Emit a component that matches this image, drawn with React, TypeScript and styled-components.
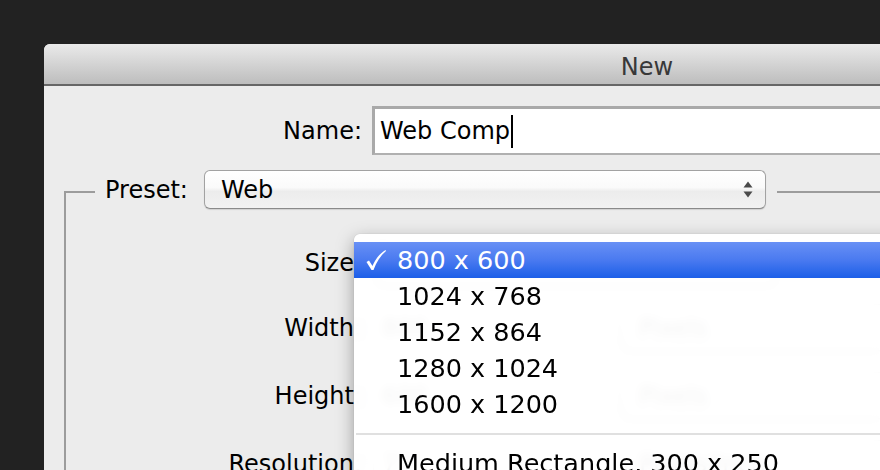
import React from "react";
import styled, { createGlobalStyle } from "styled-components";

const Global = createGlobalStyle`
  html, body { margin: 0; padding: 0; background: #222222; overflow: hidden; }
  body { width: 880px; height: 470px; font-family: "DejaVu Sans", "Liberation Sans", sans-serif; }
`;

const Screen = styled.div`
  width: 880px;
  height: 470px;
  overflow: hidden;
  padding: 44px 0 0 44px;
  box-sizing: border-box;
`;

const Window = styled.div`
  width: 1206px;
  height: 600px;
  background: #ececec;
  border-radius: 6px 6px 0 0;
  overflow: hidden;
`;

const TitleBar = styled.div`
  height: 42px;
  background: linear-gradient(#eaeaea, #bdbdbd);
  border-bottom: 2px solid #666666;
  display: flex;
  align-items: center;
  justify-content: center;
  font-size: 24px;
  color: #383838;
  padding-top: 6px;
  box-sizing: border-box;
`;

const Content = styled.div`
  position: relative;
  padding: 20px 0 0 20px;
  display: flex;
  flex-direction: column;
`;

const Row = styled.div<{ $top?: number }>`
  display: flex;
  align-items: center;
  gap: 10px;
  margin-top: ${(p) => p.$top ?? 0}px;
`;

const Label = styled.div<{ $w?: number }>`
  width: ${(p) => p.$w ?? 296}px;
  text-align: right;
  font-size: 24px;
  color: #000;
  white-space: nowrap;
`;

const NameField = styled.div`
  flex: 1;
  height: 49px;
  box-sizing: border-box;
  background: #fff;
  border-top: 3px solid #a9a9a9;
  border-left: 3px solid #a9a9a9;
  border-bottom: 2px solid #b0b0b0;
  display: flex;
  align-items: center;
  padding-left: 5px;
  font-size: 24px;
  color: #000;
`;

const Caret = styled.span`
  display: inline-block;
  width: 2px;
  height: 33px;
  background: #000;
  margin-left: 1px;
`;

const Group = styled.div`
  display: flex;
  flex-direction: column;
  margin-top: 15px;
`;

const GroupHeader = styled.div`
  display: flex;
  align-items: flex-start;
`;

const CornerLine = styled.div`
  width: 31px;
  height: 18px;
  margin-top: 21px;
  border-top: 2px solid #9c9c9c;
  border-left: 2px solid #9c9c9c;
  box-sizing: border-box;
`;

const HeaderLabel = styled.div`
  font-size: 24px;
  color: #000;
  margin-left: 10px;
  height: 39px;
  display: flex;
  align-items: center;
`;

const Popup = styled.div<{ $w: number }>`
  width: ${(p) => p.$w}px;
  height: 39px;
  box-sizing: border-box;
  margin-left: 16px;
  border: 1px solid #a2a2a2;
  border-bottom-color: #8a8a8a;
  border-radius: 6px;
  background: linear-gradient(#ffffff 0%, #fafafa 45%, #ececec 55%, #f2f2f2 100%);
  box-shadow: 0 1px 1px rgba(0, 0, 0, 0.12);
  display: flex;
  align-items: center;
  justify-content: space-between;
  padding: 0 12px 0 16px;
  font-size: 24px;
  color: #000;
`;

const RightLine = styled.div`
  flex: 1;
  height: 2px;
  background: #9c9c9c;
  margin: 21px 0 0 11px;
`;

const GroupBody = styled.div`
  border-left: 2px solid #9c9c9c;
  padding: 30px 0 40px 0;
  display: flex;
  flex-direction: column;
`;

const BodyRow = styled.div<{ $top?: number }>`
  display: flex;
  align-items: center;
  margin-top: ${(p) => p.$top ?? 0}px;
`;

const BodyLabel = styled.div`
  width: 296px;
  text-align: right;
  font-size: 24px;
  color: #000;
  white-space: nowrap;
`;

const Field = styled.div`
  width: 235px;
  height: 47px;
  margin-left: 11px;
  box-sizing: border-box;
  background: #fff;
  border: 1px solid #a0a0a0;
  font-size: 24px;
  display: flex;
  align-items: center;
  padding-left: 8px;
`;

const SmallPopup = styled.div<{ $w: number }>`
  width: ${(p) => p.$w}px;
  height: 47px;
  margin-left: 14px;
  box-sizing: border-box;
  border: 1px solid #a0a0a0;
  border-radius: 6px;
  background: linear-gradient(#ffffff, #ececec);
  font-size: 24px;
  display: flex;
  align-items: center;
  padding-left: 16px;
`;

const Menu = styled.div`
  position: absolute;
  left: 310px;
  top: 148px;
  width: 700px;
  height: 400px;
  padding-top: 8px;
  box-sizing: border-box;
  background: rgba(255, 255, 255, 0.96);
  backdrop-filter: blur(4px);
  border-radius: 6px;
  box-shadow: 0 6px 18px rgba(0, 0, 0, 0.35), 0 0 1px rgba(0, 0, 0, 0.3);
  font-size: 25.5px;
  color: #000;
`;

const MenuItem = styled.div<{ $active?: boolean }>`
  height: 36px;
  display: flex;
  align-items: center;
  padding-left: 43px;
  position: relative;
  white-space: nowrap;
  color: ${(p) => (p.$active ? "#fff" : "#000")};
  background: ${(p) =>
    p.$active ? "linear-gradient(#6890f5, #4a7af0 50%, #1c5fe8)" : "transparent"};
`;

const CheckIcon = styled.svg`
  position: absolute;
  left: 11px;
  top: 7px;
`;

const Separator = styled.div`
  height: 2px;
  background: #e0e0e0;
  margin: 11px 0 10px 2px;
`;

const Arrows = () => (
  <svg width="10" height="17" viewBox="0 0 10 17">
    <path d="M5 0.5 L9.5 6.5 L0.5 6.5 Z" fill="#4a4a4a" />
    <path d="M0.5 10.5 L9.5 10.5 L5 16.5 Z" fill="#4a4a4a" />
  </svg>
);

const Check = () => (
  <CheckIcon width="22" height="22" viewBox="0 0 22 22">
    <path
      d="M1.5 13 L4 11.5 L7.5 17 C10 11 14.5 4.5 20.5 1 L21 2 C15.5 6.5 11.5 13 8.5 21 L6.5 21 Z"
      fill="#ffffff"
    />
  </CheckIcon>
);

const sizes = ["800 x 600", "1024 x 768", "1152 x 864", "1280 x 1024", "1600 x 1200"];

export default function App() {
  return (
    <>
      <Global />
      <Screen>
        <Window>
          <TitleBar>New</TitleBar>
          <Content>
            <Row>
              <Label $w={298}>Name:</Label>
              <NameField>
                Web Comp
                <Caret />
              </NameField>
            </Row>
            <Group>
              <GroupHeader>
                <CornerLine />
                <HeaderLabel>Preset:</HeaderLabel>
                <Popup $w={562}>
                  <span>Web</span>
                  <Arrows />
                </Popup>
                <RightLine />
              </GroupHeader>
              <GroupBody>
                <BodyRow>
                  <BodyLabel>Size:</BodyLabel>
                  <SmallPopup $w={400}>800 x 600</SmallPopup>
                </BodyRow>
                <BodyRow $top={18}>
                  <BodyLabel>Width:</BodyLabel>
                  <Field>800</Field>
                  <SmallPopup $w={300}>Pixels</SmallPopup>
                </BodyRow>
                <BodyRow $top={21}>
                  <BodyLabel>Height:</BodyLabel>
                  <Field>600</Field>
                  <SmallPopup $w={300}>Pixels</SmallPopup>
                </BodyRow>
                <BodyRow $top={21}>
                  <BodyLabel>Resolution:</BodyLabel>
                  <Field>72</Field>
                  <SmallPopup $w={300}>Pixels/Inch</SmallPopup>
                </BodyRow>
              </GroupBody>
            </Group>
            <Menu>
              {sizes.map((s, i) => (
                <MenuItem key={s} $active={i === 0}>
                  {i === 0 && <Check />}
                  {s}
                </MenuItem>
              ))}
              <Separator />
              <MenuItem>Medium Rectangle, 300 x 250</MenuItem>
            </Menu>
          </Content>
        </Window>
      </Screen>
    </>
  );
}
